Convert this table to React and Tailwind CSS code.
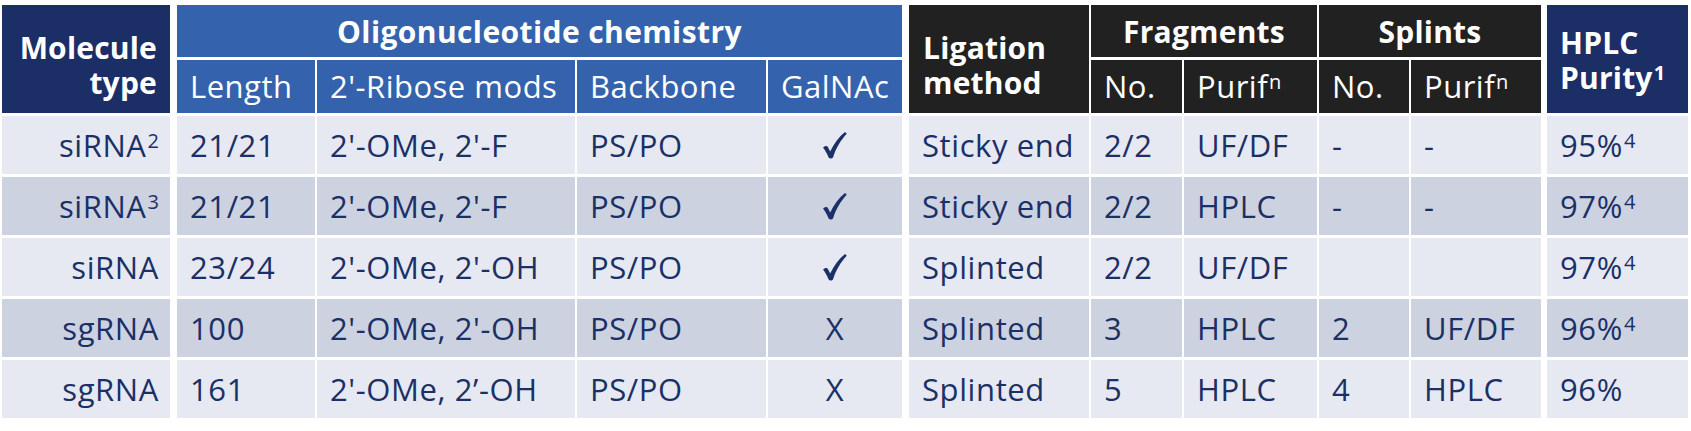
const rows = [
  { mol: 'siRNA', molSup: '2', len: '21/21', mods: "2'-OMe, 2'-F", bb: 'PS/PO', gal: true, lig: 'Sticky end', fNo: '2/2', fPur: 'UF/DF', sNo: '-', sPur: '-', hplc: '95%', hSup: '4' },
  { mol: 'siRNA', molSup: '3', len: '21/21', mods: "2'-OMe, 2'-F", bb: 'PS/PO', gal: true, lig: 'Sticky end', fNo: '2/2', fPur: 'HPLC', sNo: '-', sPur: '-', hplc: '97%', hSup: '4' },
  { mol: 'siRNA', len: '23/24', mods: "2'-OMe, 2'-OH", bb: 'PS/PO', gal: true, lig: 'Splinted', fNo: '2/2', fPur: 'UF/DF', sNo: '', sPur: '', hplc: '97%', hSup: '4' },
  { mol: 'sgRNA', len: '100', mods: "2'-OMe, 2'-OH", bb: 'PS/PO', gal: false, lig: 'Splinted', fNo: '3', fPur: 'HPLC', sNo: '2', sPur: 'UF/DF', hplc: '96%', hSup: '4' },
  { mol: 'sgRNA', len: '161', mods: "2'-OMe, 2’-OH", bb: 'PS/PO', gal: false, lig: 'Splinted', fNo: '5', fPur: 'HPLC', sNo: '4', sPur: 'HPLC', hplc: '96%' },
]

function Cell({ children, className = '', dark }) {
  return (
    <div className={`flex items-center pl-[13px] ${dark ? 'bg-[#cdd2e1]' : 'bg-[#e6e9f1]'} ${className}`}>
      <span>{children}</span>
    </div>
  )
}

function Sup({ children }) {
  return <span className="text-[20px] relative -top-[9px] ml-[1px] tracking-normal">{children}</span>
}

// heavy tick as in the GalNAc column
function Check() {
  return (
    <svg width="24" height="27" viewBox="0 0 24 27" className="mt-[1px]">
      <path
        d="M0 15.5 C1.5 14 3.5 13.5 4.6 14.5 L7.2 19.6 C10.8 12 15.8 5 22 0 L23.8 1.8 C18 7.8 13 16 10.2 25 C9.5 26.8 6.6 27 5.6 25.4 C4 21.5 2 18 0 15.5 Z"
        fill="#1b3067"
      />
    </svg>
  )
}

const head = 'text-white flex items-center pl-[13px] tracking-[0.5px]'

export default function App() {
  return (
    <div className="w-[1691px] h-[431px] bg-white pt-[5px] pl-[2px] font-['Open_Sans',sans-serif] text-[31px] tracking-[0.6px] text-[#1b3067] leading-none">
      <div className="grid grid-cols-[168px_143px_258px_189px_134px_185px_91px_133px_90px_130px_145px] grid-rows-[52px_53px_58px_58px_58px_58px_58px] gap-x-[2px] gap-y-[3px]">
        {/* header */}
        <div className="row-span-2 bg-[#1b2f66] text-white text-[30px] font-bold tracking-[0.2px] flex flex-col items-end justify-end pr-[13px] pb-[13px] leading-[35px]">
          <span>Molecule</span>
          <span>type</span>
        </div>
        <div className="col-span-4 ml-[5px] bg-[#3462ad] text-white text-[30px] font-bold tracking-[0.4px] flex items-center justify-center pt-[2px]">
          Oligonucleotide chemistry
        </div>
        <div className="row-span-2 ml-[5px] bg-[#212121] text-white text-[30px] font-bold tracking-[0.2px] flex flex-col justify-end pl-[14px] pb-[13px] leading-[35px]">
          <span>Ligation</span>
          <span>method</span>
        </div>
        <div className="col-span-2 bg-[#212121] text-white text-[30px] font-bold tracking-[0.2px] flex items-center justify-center pt-[2px]">Fragments</div>
        <div className="col-span-2 bg-[#212121] text-white text-[30px] font-bold tracking-[0.2px] flex items-center justify-center pt-[2px]">Splints</div>
        <div className="row-span-2 ml-[4px] bg-[#1b2f66] text-white text-[30px] font-bold tracking-[0.2px] flex flex-col justify-end pl-[13px] pb-[14px] leading-[35px]">
          <span>HPLC</span>
          <span>
            Purity<Sup>1</Sup>
          </span>
        </div>

        <div className={`ml-[5px] bg-[#3462ad] ${head}`}>Length</div>
        <div className={`bg-[#3462ad] ${head}`}>2'-Ribose mods</div>
        <div className={`bg-[#3462ad] ${head}`}>Backbone</div>
        <div className={`bg-[#3462ad] ${head}`}>GalNAc</div>
        <div className={`bg-[#212121] ${head}`}>No.</div>
        <div className={`bg-[#212121] ${head}`}>
          <span>
            Purif<Sup>n</Sup>
          </span>
        </div>
        <div className={`bg-[#212121] ${head}`}>No.</div>
        <div className={`bg-[#212121] ${head}`}>
          <span>
            Purif<Sup>n</Sup>
          </span>
        </div>

        {/* body */}
        {rows.map((r, i) => {
          const dark = i % 2 === 1
          return [
            <Cell key={`m${i}`} dark={dark} className="justify-end pr-[11px]">
              {r.mol}
              {r.molSup && <Sup>{r.molSup}</Sup>}
            </Cell>,
            <Cell key={`l${i}`} dark={dark} className="ml-[5px]">{r.len}</Cell>,
            <Cell key={`r${i}`} dark={dark}>{r.mods}</Cell>,
            <Cell key={`b${i}`} dark={dark}>{r.bb}</Cell>,
            <div key={`g${i}`} className={`flex items-center justify-center ${dark ? 'bg-[#cdd2e1]' : 'bg-[#e6e9f1]'}`}>
              {r.gal ? <Check /> : <span>X</span>}
            </div>,
            <Cell key={`lg${i}`} dark={dark} className="ml-[5px]">{r.lig}</Cell>,
            <Cell key={`fn${i}`} dark={dark}>{r.fNo}</Cell>,
            <Cell key={`fp${i}`} dark={dark}>{r.fPur}</Cell>,
            <Cell key={`sn${i}`} dark={dark}>{r.sNo}</Cell>,
            <Cell key={`sp${i}`} dark={dark}>{r.sPur}</Cell>,
            <Cell key={`h${i}`} dark={dark} className="ml-[4px]">
              {r.hplc}
              {r.hSup && <Sup>{r.hSup}</Sup>}
            </Cell>,
          ]
        })}
      </div>
    </div>
  )
}
